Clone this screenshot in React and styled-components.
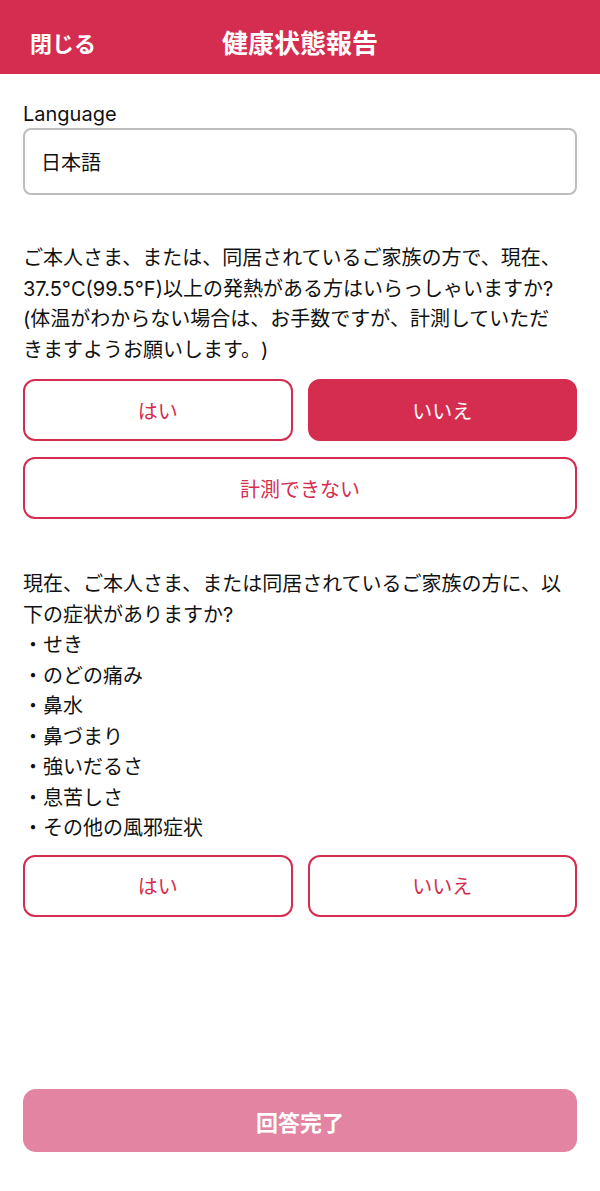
import styled, { createGlobalStyle } from "styled-components";

const RED = "#D52D50";

const GlobalStyle = createGlobalStyle`
    html, body {
        margin: 0;
        padding: 0;
        background: #FFFFFF;
    }
    * {
        box-sizing: border-box;
    }
`

export default function App() {
    return (
        <>
            <GlobalStyle />
            <Page>
                <Header>
                    <CloseLink>閉じる</CloseLink>
                    <Title>健康状態報告</Title>
                </Header>
                <Content>
                    <Label>Language</Label>
                    <Select>日本語</Select>

                    <Question>
                        ご本人さま、または、同居されているご家族の方で、現在、
                        <br />37.5°C(99.5°F)以上の発熱がある方はいらっしゃいますか?
                        <br />(体温がわからない場合は、お手数ですが、計測していただ
                        <br />きますようお願いします。)
                    </Question>
                    <Choices>
                        <Choice>はい</Choice>
                        <Choice selected>いいえ</Choice>
                        <Choice wide>計測できない</Choice>
                    </Choices>

                    <Question second>
                        現在、ご本人さま、または同居されているご家族の方に、以
                        <br />下の症状がありますか?
                        <br />・せき
                        <br />・のどの痛み
                        <br />・鼻水
                        <br />・鼻づまり
                        <br />・強いだるさ
                        <br />・息苦しさ
                        <br />・その他の風邪症状
                    </Question>
                    <Choices>
                        <Choice>はい</Choice>
                        <Choice>いいえ</Choice>
                    </Choices>

                    <Submit disabled>回答完了</Submit>
                </Content>
            </Page>
        </>
    )
}

const Page = styled.div`
    min-height: 1191px;
    display: flex;
    flex-direction: column;
    font-family: Inter, "Noto Sans CJK JP", sans-serif;
    color: #111111;
`

const Header = styled.header`
    height: 74px;
    background: ${RED};
    display: grid;
    grid-template-columns: 1fr auto 1fr;
    align-items: center;
    padding: 9px 30px 0;
    color: #FFFFFF;
    font-weight: 700;
`

const CloseLink = styled.div`
    font-size: 22px;
    justify-self: start;
`

const Title = styled.h1`
    margin: 0;
    font-size: 26px;
    font-weight: 700;
`

const Content = styled.main`
    flex: 1;
    display: flex;
    flex-direction: column;
    padding: 28px 23px 39px;
`

const Label = styled.div`
    font-size: 20px;
    line-height: 24px;
    height: 24px;
`

const Select = styled.div`
    margin-top: 2px;
    height: 67px;
    border: 2px solid #BDBDBD;
    border-radius: 8px;
    display: flex;
    align-items: center;
    padding: 0 16px;
    font-size: 20px;
`

const Question = styled.p`
    margin: ${({ second }) => second ? "50px 0 11px" : "48px 0 14px"};
    font-size: 20px;
    line-height: 30.5px;
    white-space: nowrap;
    text-spacing-trim: space-all;
`

const Choices = styled.div`
    display: grid;
    grid-template-columns: 1fr 1fr;
    column-gap: 15px;
    row-gap: 16px;
`

const Choice = styled.button`
    grid-column: ${({ wide }) => wide ? "1 / -1" : "auto"};
    height: 62px;
    border: 2px solid ${RED};
    border-radius: 12px;
    background: ${({ selected }) => selected ? RED : "#FFFFFF"};
    color: ${({ selected }) => selected ? "#FFFFFF" : RED};
    font-family: inherit;
    font-size: 20px;
    padding: 0;
`

const Submit = styled.button`
    margin-top: auto;
    height: 63px;
    border: none;
    border-radius: 13px;
    background: #E284A2;
    color: #FFFFFF;
    font-family: inherit;
    font-size: 22px;
    font-weight: 700;
    padding: 0;
`
